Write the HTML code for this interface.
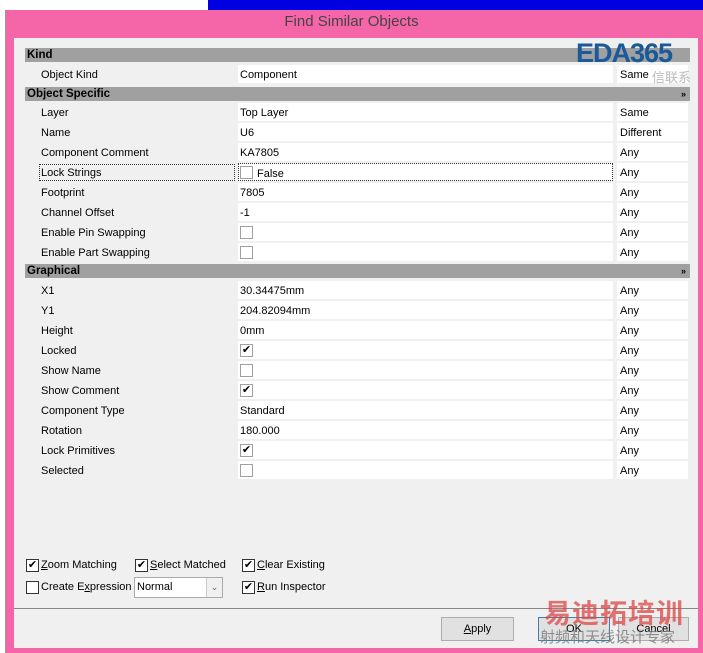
<!DOCTYPE html><html><head><style>
*{margin:0;padding:0;box-sizing:border-box}
body{width:703px;height:653px;position:relative;overflow:hidden;background:#f0f0f0;font-family:"Liberation Sans","Noto Sans CJK SC",sans-serif;font-size:11px;color:#000}
.a{position:absolute}
.hdr{position:absolute;left:25px;width:665px;height:14px;background:#a0a0a0;font-weight:bold;font-size:11.5px;line-height:14px;padding-left:2px}
.lab{position:absolute;left:41px;height:18px;line-height:20px}
.val{position:absolute;left:238px;width:375px;height:18px;background:#fff;line-height:20px;padding-left:2px}
.m{position:absolute;left:617px;width:71px;height:18px;background:#fff;line-height:20px;padding-left:3px}
.cb{position:absolute;width:13px;height:13px;border:1px solid #a0a0a0;background:#fff;font-size:11px;line-height:11px;text-align:center}
.btn{position:absolute;top:617px;height:24px;border:1px solid #adadad;background:#e1e1e1;text-align:center;line-height:22px}
</style></head><body>
<div class="a" style="left:0;top:0;width:208px;height:10px;background:#fff"></div>
<div class="a" style="left:208px;top:0;width:495px;height:10px;background:#0000e0"></div>
<div class="a" style="left:0;top:10px;width:6px;height:643px;background:#fff;border-right:1px solid #999"></div>
<div class="a" style="left:6px;top:10px;width:697px;height:643px;background:#f566a8"></div>
<div class="a" style="left:0;top:10px;width:703px;height:28px;text-align:center;line-height:24px;font-size:15px;color:#444">Find Similar Objects</div>
<div class="a" style="left:14px;top:38px;width:684px;height:610px;background:#f0f0f0"></div>
<div class="a" style="left:14px;top:608px;width:684px;height:1px;background:#888"></div>

<div class="hdr" style="top:48px">Kind</div>
<div class="lab" style="top:65px">Object Kind</div><div class="val" style="top:65px">Component</div><div class="m" style="top:65px">Same</div>
<div class="hdr" style="top:87px">Object Specific<span style="float:right;padding-right:4px;font-size:9px">»</span></div>

<div class="lab" style="top:103px">Layer</div><div class="val" style="top:103px">Top Layer</div><div class="m" style="top:103px">Same</div>
<div class="lab" style="top:123px">Name</div><div class="val" style="top:123px">U6</div><div class="m" style="top:123px">Different</div>
<div class="lab" style="top:143px">Component Comment</div><div class="val" style="top:143px">KA7805</div><div class="m" style="top:143px">Any</div>
<div class="a" style="left:39px;top:164px;width:196px;height:17px;border:1px dotted #333"></div>
<div class="lab" style="top:163px">Lock Strings</div><div class="val" style="top:163px;border:1px dotted #333;padding-left:18px">False</div><div class="cb" style="left:240px;top:166px"></div><div class="m" style="top:163px">Any</div>
<div class="lab" style="top:183px">Footprint</div><div class="val" style="top:183px">7805</div><div class="m" style="top:183px">Any</div>
<div class="lab" style="top:203px">Channel Offset</div><div class="val" style="top:203px">-1</div><div class="m" style="top:203px">Any</div>
<div class="lab" style="top:223px">Enable Pin Swapping</div><div class="val" style="top:223px"></div><div class="cb" style="left:240px;top:226px"></div><div class="m" style="top:223px">Any</div>
<div class="lab" style="top:243px">Enable Part Swapping</div><div class="val" style="top:243px"></div><div class="cb" style="left:240px;top:246px"></div><div class="m" style="top:243px">Any</div>

<div class="hdr" style="top:264px">Graphical<span style="float:right;padding-right:4px;font-size:9px">»</span></div>
<div class="lab" style="top:281px">X1</div><div class="val" style="top:281px">30.34475mm</div><div class="m" style="top:281px">Any</div>
<div class="lab" style="top:301px">Y1</div><div class="val" style="top:301px">204.82094mm</div><div class="m" style="top:301px">Any</div>
<div class="lab" style="top:321px">Height</div><div class="val" style="top:321px">0mm</div><div class="m" style="top:321px">Any</div>
<div class="lab" style="top:341px">Locked</div><div class="val" style="top:341px"></div><div class="cb" style="left:240px;top:344px">✔</div><div class="m" style="top:341px">Any</div>
<div class="lab" style="top:361px">Show Name</div><div class="val" style="top:361px"></div><div class="cb" style="left:240px;top:364px"></div><div class="m" style="top:361px">Any</div>
<div class="lab" style="top:381px">Show Comment</div><div class="val" style="top:381px"></div><div class="cb" style="left:240px;top:384px">✔</div><div class="m" style="top:381px">Any</div>
<div class="lab" style="top:401px">Component Type</div><div class="val" style="top:401px">Standard</div><div class="m" style="top:401px">Any</div>
<div class="lab" style="top:421px">Rotation</div><div class="val" style="top:421px">180.000</div><div class="m" style="top:421px">Any</div>
<div class="lab" style="top:441px">Lock Primitives</div><div class="val" style="top:441px"></div><div class="cb" style="left:240px;top:444px">✔</div><div class="m" style="top:441px">Any</div>
<div class="lab" style="top:461px">Selected</div><div class="val" style="top:461px"></div><div class="cb" style="left:240px;top:464px"></div><div class="m" style="top:461px">Any</div>

<div class="a" style="left:576px;top:38px;font-size:27px;font-weight:bold;color:#1a5a9a;letter-spacing:-1px;z-index:5">EDA365</div>
<div class="a" style="left:652px;top:67px;font-size:13px;color:#bbb;z-index:5">信联系</div>

<div class="cb" style="left:26px;top:559px;border-color:#333">✔</div><div class="a" style="left:41px;top:559px"><u>Z</u>oom Matching</div>
<div class="cb" style="left:135px;top:559px;border-color:#333">✔</div><div class="a" style="left:150px;top:559px"><u>S</u>elect Matched</div>
<div class="cb" style="left:242px;top:559px;border-color:#333">✔</div><div class="a" style="left:257px;top:559px"><u>C</u>lear Existing</div>
<div class="cb" style="left:26px;top:581px;border-color:#333"></div><div class="a" style="left:41px;top:581px">Create E<u>x</u>pression</div>
<div class="a" style="left:134px;top:577px;width:89px;height:21px;border:1px solid #aaa;background:#fff;padding-left:2px;line-height:18px">Normal<span style="position:absolute;right:0;top:0;width:16px;height:19px;border-left:1px solid #ccc;background:#f0f0f0;text-align:center;color:#666;font-size:9px">⌄</span></div>
<div class="cb" style="left:242px;top:581px;border-color:#333">✔</div><div class="a" style="left:257px;top:581px"><u>R</u>un Inspector</div>

<div class="btn" style="left:441px;width:73px"><u>A</u>pply</div>
<div class="btn" style="left:538px;width:72px;border-color:#3c7fb1">OK</div>
<div class="btn" style="left:618px;width:71px">Cancel</div>
<div class="a" style="left:544px;top:592px;font-size:27px;font-weight:bold;color:rgba(220,70,70,.75);letter-spacing:1px">易迪拓培训</div>
<div class="a" style="left:540px;top:626px;font-size:15px;color:rgba(120,120,120,.8)">射频和天线设计专家</div>
</body></html>
